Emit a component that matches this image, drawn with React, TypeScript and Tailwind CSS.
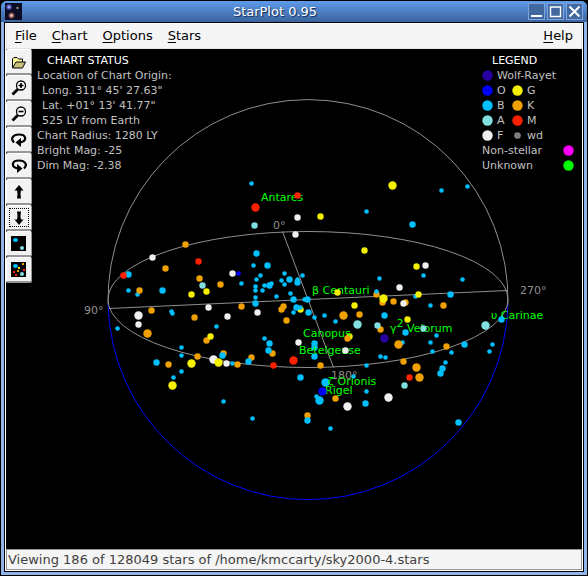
import type { ReactNode } from 'react'

type Kind = 'W' | 'O' | 'B' | 'A' | 'F' | 'G' | 'K' | 'M'

const colors: Record<Kind, string> = {
  W: '#2800a0',
  O: '#0000ff',
  B: '#00bfff',
  A: '#80e0e0',
  F: '#f0f0f0',
  G: '#f4f000',
  K: '#f0a000',
  M: '#ff2000',
}

// radius by brightness class
const radii: Record<number, number> = { 2: 2.3, 3: 3.2, 4: 4.2 }

// [x, y, brightness class, spectral class]
const stars: [number, number, number, Kind][] = [
  [185, 244, 3, 'K'], [152, 257, 3, 'F'], [198, 261, 3, 'M'], [165, 268, 3, 'K'],
  [128, 274, 3, 'B'], [123, 275, 3, 'M'], [199, 278, 3, 'K'], [202, 285, 3, 'A'],
  [220, 284, 3, 'K'], [238, 273, 2, 'O'], [232, 273, 3, 'F'], [128, 290, 2, 'B'],
  [137, 294, 2, 'B'], [139, 290, 3, 'K'], [162, 290, 3, 'B'], [191, 294, 3, 'G'],
  [206, 291, 3, 'G'], [151, 310, 3, 'K'], [138, 315, 4, 'F'], [138, 324, 3, 'F'],
  [117, 328, 2, 'B'], [147, 333, 4, 'K'], [171, 311, 2, 'B'], [172, 313, 2, 'B'],
  [194, 317, 3, 'K'], [208, 307, 3, 'F'], [227, 316, 3, 'F'], [216, 326, 2, 'B'],
  [206, 340, 3, 'K'], [210, 336, 3, 'G'], [181, 347, 2, 'B'], [181, 355, 2, 'B'],
  [197, 356, 3, 'K'], [156, 362, 3, 'B'], [168, 364, 3, 'K'], [191, 363, 4, 'G'],
  [181, 371, 2, 'B'], [173, 377, 2, 'B'], [172, 385, 4, 'G'], [213, 359, 4, 'F'],
  [218, 362, 4, 'G'], [223, 353, 3, 'K'], [222, 355, 3, 'B'], [226, 363, 3, 'F'],
  [232, 363, 2, 'B'], [237, 364, 3, 'K'], [223, 401, 2, 'B'],
  [251, 183, 2, 'B'], [255, 207, 4, 'M'], [254, 225, 3, 'A'], [297, 217, 3, 'F'],
  [320, 216, 3, 'G'], [295, 234, 3, 'F'], [366, 211, 2, 'B'], [364, 250, 3, 'G'],
  [256, 253, 3, 'B'], [253, 265, 2, 'B'], [267, 265, 3, 'B'], [260, 275, 2, 'B'],
  [256, 279, 2, 'B'], [241, 283, 2, 'B'], [264, 285, 2, 'B'], [269, 285, 3, 'B'],
  [271, 283, 2, 'B'], [255, 286, 2, 'B'], [255, 290, 2, 'B'], [284, 273, 2, 'B'],
  [281, 280, 2, 'B'], [289, 279, 3, 'B'], [284, 284, 2, 'B'], [297, 279, 2, 'B'],
  [297, 282, 3, 'B'], [302, 275, 2, 'B'], [255, 297, 2, 'B'], [255, 303, 3, 'B'],
  [262, 290, 2, 'B'], [276, 296, 2, 'B'], [290, 293, 2, 'B'], [293, 299, 3, 'B'],
  [304, 299, 2, 'B'], [307, 299, 3, 'B'], [241, 306, 3, 'K'], [257, 312, 3, 'F'],
  [281, 309, 3, 'K'], [283, 306, 3, 'K'], [286, 320, 3, 'K'], [300, 309, 3, 'G'],
  [296, 307, 3, 'B'], [300, 307, 2, 'B'], [293, 312, 2, 'B'], [308, 312, 3, 'B'],
  [314, 317, 2, 'B'], [324, 315, 2, 'B'], [335, 321, 2, 'B'], [343, 315, 4, 'K'],
  [354, 305, 3, 'G'], [359, 314, 3, 'K'], [357, 324, 4, 'A'], [349, 336, 3, 'G'],
  [298, 342, 3, 'F'], [264, 338, 2, 'B'], [269, 343, 3, 'B'], [272, 353, 3, 'K'],
  [268, 350, 3, 'B'], [251, 357, 3, 'K'], [248, 361, 3, 'B'], [273, 365, 3, 'M'],
  [293, 360, 4, 'M'], [314, 343, 3, 'B'], [314, 347, 3, 'B'], [314, 356, 3, 'B'],
  [320, 365, 3, 'K'], [300, 377, 3, 'B'], [325, 382, 4, 'B'], [316, 396, 2, 'B'],
  [319, 400, 4, 'B'], [335, 398, 3, 'K'], [347, 406, 4, 'F'], [353, 376, 2, 'B'],
  [366, 365, 2, 'B'], [366, 391, 2, 'B'], [365, 403, 3, 'B'], [307, 415, 3, 'K'],
  [307, 420, 3, 'B'], [252, 418, 2, 'B'], [330, 428, 2, 'B'],
  [392, 185, 4, 'G'], [441, 190, 2, 'B'], [467, 186, 2, 'B'], [412, 224, 3, 'B'],
  [416, 266, 3, 'G'], [425, 265, 3, 'F'], [423, 275, 2, 'B'], [379, 278, 2, 'B'],
  [462, 279, 2, 'B'], [399, 287, 3, 'F'], [376, 294, 3, 'K'], [376, 291, 2, 'B'],
  [415, 296, 2, 'B'], [418, 294, 3, 'G'], [450, 294, 3, 'B'], [382, 302, 3, 'K'],
  [383, 298, 4, 'G'], [393, 301, 3, 'K'], [405, 302, 3, 'K'], [403, 303, 3, 'F'],
  [430, 305, 2, 'B'], [443, 305, 3, 'K'], [384, 315, 3, 'B'], [407, 319, 3, 'G'],
  [380, 329, 3, 'K'], [377, 325, 3, 'A'], [405, 332, 3, 'B'], [436, 335, 2, 'B'],
  [384, 338, 4, 'W'], [402, 342, 2, 'B'], [398, 344, 4, 'K'], [430, 342, 2, 'B'],
  [432, 351, 2, 'B'], [446, 346, 3, 'K'], [451, 352, 2, 'B'], [464, 344, 3, 'B'],
  [492, 344, 2, 'B'], [489, 351, 2, 'B'], [485, 325, 4, 'A'], [380, 356, 2, 'B'],
  [385, 357, 2, 'B'], [403, 361, 3, 'K'], [416, 367, 4, 'K'], [445, 362, 2, 'B'],
  [442, 368, 3, 'B'], [440, 373, 3, 'B'], [409, 377, 3, 'M'], [419, 377, 4, 'K'],
  [404, 385, 3, 'A'], [388, 397, 4, 'F'], [458, 422, 3, 'B'],
]

// stars drawn over the name labels
const frontStars: [number, number, number, Kind][] = [
  [297, 195, 3, 'M'], [337, 292, 3, 'G'], [345, 350, 3, 'F'], [347, 338, 3, 'K'],
  [423, 328, 3, 'A'], [501, 319, 3, 'B'], [322, 391, 4, 'O'],
]

const names = [
  { x: 261, y: 201, text: 'Antares' },
  { x: 312, y: 294, text: 'β Centauri' },
  { x: 303, y: 337, text: 'Canopus' },
  { x: 299, y: 354, text: 'Betelgeuse' },
  { x: 328, y: 385, text: 'ζ Orionis' },
  { x: 325, y: 394, text: 'Rigel' },
  { x: 491, y: 319, text: 'υ Carinae' },
]

function Star({ star }: { star: [number, number, number, Kind] }) {
  const [x, y, size, kind] = star
  return <circle cx={x + 0.5} cy={y + 0.5} r={radii[size]} fill={colors[kind]} />
}

function StarChart() {
  return (
    <svg
      viewBox="32 49 550 500"
      className="absolute inset-0 h-full w-full text-[11px]"
      role="img"
      aria-label="Star chart"
    >
      <g fill="none" strokeWidth="1">
        <path d="M108.06 304.5 A200 200 0 1 1 507.94 304.5" stroke="#909090" />
        <path d="M108.06 304.5 A200 200 0 0 0 507.94 304.5" stroke="#0000ff" />
        <ellipse cx="308" cy="299.5" rx="200" ry="68" stroke="#909090" />
        <path d="M109 308.5 L507 290.5 M282.5 231.5 L333.5 367.5" stroke="#909090" />
      </g>
      <g fill="#909090">
        <text x="273" y="229">0°</text>
        <text x="84" y="314">90°</text>
        <text x="520" y="294">270°</text>
        <text x="331" y="379">180°</text>
      </g>
      {stars.map((star, i) => (
        <Star key={i} star={star} />
      ))}
      <g fill="#00ff00">
        {names.map((name) => (
          <text key={name.text} x={name.x} y={name.y}>
            {name.text}
          </text>
        ))}
        <text x="390" y="332">
          γ<tspan dy="-5">2</tspan>
          <tspan dy="5"> Velorum</tspan>
        </text>
      </g>
      {frontStars.map((star, i) => (
        <Star key={i} star={star} />
      ))}
    </svg>
  )
}

function Dot({ color }: { color: string }) {
  return (
    <svg viewBox="0 0 11 11" className="size-[11px] shrink-0">
      <circle cx="5.5" cy="5.5" r="5.2" fill={color} />
    </svg>
  )
}

function Legend() {
  const pairs: [Kind, Kind][] = [['O', 'G'], ['B', 'K'], ['A', 'M']]
  return (
    <section className="absolute top-1 right-2 w-[92px] text-[#c0c0c0]">
      <h2 className="pl-[10px] text-white">LEGEND</h2>
      <div className="flex items-center gap-1">
        <Dot color={colors.W} />
        Wolf-Rayet
      </div>
      {pairs.map(([left, right]) => (
        <div key={left} className="flex items-center gap-1">
          <Dot color={colors[left]} />
          <span className="w-[11px]">{left}</span>
          <Dot color={colors[right]} />
          {right}
        </div>
      ))}
      <div className="flex items-center gap-1">
        <Dot color={colors.F} />
        <span className="w-[11px]">F</span>
        <svg viewBox="0 0 11 11" className="size-[11px] shrink-0">
          <circle cx="5.5" cy="5.5" r="3.3" fill="#808080" />
        </svg>
        wd
      </div>
      <div className="flex items-center justify-between">
        Non-stellar
        <Dot color="#ff00ff" />
      </div>
      <div className="flex items-center justify-between">
        Unknown
        <Dot color="#00ff00" />
      </div>
    </section>
  )
}

function ChartStatus() {
  return (
    <section className="absolute top-1 left-[5px] whitespace-nowrap text-[#c0c0c0]">
      <h2 className="pl-[10px] text-white">CHART STATUS</h2>
      <p>Location of Chart Origin:</p>
      <p className="pl-[5px]">Long. 311° 45' 27.63"</p>
      <p className="pl-[5px]">Lat. +01° 13' 41.77"</p>
      <p className="pl-[5px]">525 LY from Earth</p>
      <p>Chart Radius: 1280 LY</p>
      <p>Bright Mag: -25</p>
      <p>Dim Mag: -2.38</p>
    </section>
  )
}

const tools: { label: string; icon: ReactNode; focused?: boolean }[] = [
  {
    label: 'Open',
    icon: (
      <>
        <path d="M1.5 13.5 V5 L3 3.5 H6 L7.5 5 H11.5 V8" fill="#ffff99" stroke="#000" />
        <path d="M1.5 14 L5 8 H14.5 L11.5 14 Z" fill="#c6c27c" stroke="#000" />
      </>
    ),
  },
  {
    label: 'Zoom in',
    icon: (
      <>
        <path d="M7 9 L1.5 14.5" stroke="#000" strokeWidth="2.8" />
        <circle cx="10" cy="5.5" r="4.5" fill="#fff" stroke="#000" strokeWidth="1.3" />
        <path d="M7.5 5.5 H12.5 M10 3 V8" stroke="#000" strokeWidth="1.7" />
      </>
    ),
  },
  {
    label: 'Zoom out',
    icon: (
      <>
        <path d="M7 9 L1.5 14.5" stroke="#000" strokeWidth="2.8" />
        <circle cx="10" cy="5.5" r="4.5" fill="#fff" stroke="#000" strokeWidth="1.3" />
        <path d="M7.5 5.5 H12.5" stroke="#000" strokeWidth="1.7" />
      </>
    ),
  },
  {
    label: 'Rotate clockwise',
    icon: (
      <>
        <path d="M3 10.5 C-1 6.5 2 2.5 8 2.5 C15.5 2.5 16.5 9 9 10.5" fill="none" stroke="#000" strokeWidth="2.2" />
        <path d="M4.5 10.5 L10 6 V15 Z" fill="#000" />
      </>
    ),
  },
  {
    label: 'Rotate counterclockwise',
    icon: (
      <>
        <path d="M13 10.5 C17 6.5 14 2.5 8 2.5 C0.5 2.5 -0.5 9 7 10.5" fill="none" stroke="#000" strokeWidth="2.2" />
        <path d="M11.5 10.5 L6 6 V15 Z" fill="#000" />
      </>
    ),
  },
  {
    label: 'Tilt up',
    icon: (
      <>
        <path d="M8 1 L12.5 6.5 H3.5 Z" fill="#000" />
        <path d="M6 6 H10 L9.5 10 L10 14.5 H6 L6.5 10 Z" fill="#000" />
      </>
    ),
  },
  {
    label: 'Tilt down',
    focused: true,
    icon: (
      <>
        <path d="M8 15 L12.5 9.5 H3.5 Z" fill="#000" />
        <path d="M6 10 H10 L9.5 6 L10 1.5 H6 L6.5 6 Z" fill="#000" />
      </>
    ),
  },
  {
    label: 'Fewer stars',
    icon: (
      <>
        <rect x="0" y="0" width="15" height="15" fill="#000" />
        <ellipse cx="4.5" cy="4" rx="2.5" ry="2" fill="#00bfff" />
        <circle cx="11" cy="12" r="2" fill="#80e0e0" />
      </>
    ),
  },
  {
    label: 'More stars',
    icon: (
      <>
        <rect x="0" y="0" width="15" height="15" fill="#000" />
        <ellipse cx="4.5" cy="4" rx="2.5" ry="2" fill="#00bfff" />
        <circle cx="11" cy="12" r="2" fill="#80e0e0" />
        <path d="M11 1 h2 v2 h-2z M6 8 h2 v2 h-2z" fill="#f0a000" />
        <path d="M7 5 h2 v2 h-2z" fill="#f4f000" />
        <path d="M12 7 h2 v2 h-2z M2 9 h2 v2 h-2z M4 12 h2 v2 h-2z" fill="#ff2000" />
      </>
    ),
  },
]

function Toolbar() {
  return (
    <div role="toolbar" aria-label="Chart tools" className="flex w-[26px] shrink-0 flex-col">
      {tools.map((tool) => (
        <button
          key={tool.label}
          type="button"
          aria-label={tool.label}
          className="relative flex h-[26px] items-center justify-center rounded-xs border border-t-white border-r-[#969696] border-b-2 border-b-[#969696] border-l-white bg-[#f2f2f2]"
        >
          <svg viewBox="0 0 16 16" className="size-4">
            {tool.icon}
          </svg>
          {tool.focused && <span className="absolute inset-[2px] border border-dotted border-black" />}
        </button>
      ))}
    </div>
  )
}

function MenuItem({ label }: { label: string }) {
  return (
    <button type="button" className="leading-4">
      <span className="underline underline-offset-2">{label[0]}</span>
      {label.slice(1)}
    </button>
  )
}

function WindowButton({ label, children }: { label: string; children: ReactNode }) {
  return (
    <button
      type="button"
      aria-label={label}
      className="size-[17px] border border-[#7da5dc] bg-[#41699f]"
    >
      <svg viewBox="0 0 15 15" className="size-full" fill="none" stroke="#fff" strokeWidth="2">
        {children}
      </svg>
    </button>
  )
}

export default function App() {
  return (
    <div className="flex h-screen flex-col bg-black font-['DejaVu_Sans',sans-serif] text-[11px] leading-[15px]">
      <div className="m-px flex min-h-0 flex-1 flex-col rounded-t-md bg-[#8fb4ea]">
        {/* Title bar */}
        <header className="flex h-[21px] shrink-0 items-center rounded-t-md bg-linear-to-b from-[#5f9bea] to-[#3a64a0] px-1">
          <svg viewBox="0 0 17 17" className="size-[17px]" aria-hidden="true">
            <defs>
              <radialGradient id="blueGlow">
                <stop offset="0" stopColor="#e0e0ff" />
                <stop offset="0.4" stopColor="#6868d8" />
                <stop offset="1" stopColor="#101030" />
              </radialGradient>
              <radialGradient id="redGlow">
                <stop offset="0" stopColor="#ffe0d0" />
                <stop offset="0.5" stopColor="#b07068" />
                <stop offset="1" stopColor="#101028" />
              </radialGradient>
            </defs>
            <rect width="17" height="17" fill="#0c0c24" />
            <circle cx="4" cy="4" r="3.5" fill="url(#blueGlow)" />
            <circle cx="6.5" cy="12.5" r="3.5" fill="url(#redGlow)" />
            <circle cx="12.5" cy="5" r="1.2" fill="#908c80" />
          </svg>
          <h1 className="flex-1 text-center text-[13px] text-white [text-shadow:1px_1px_1px_#142850]">
            StarPlot 0.95
          </h1>
          <div className="flex gap-[2px]">
            <WindowButton label="Minimize">
              <path d="M2 12 H13" />
            </WindowButton>
            <WindowButton label="Maximize">
              <path d="M2.5 3 H12.5 V12.5 H2.5 Z" strokeWidth="1.4" />
            </WindowButton>
            <WindowButton label="Close">
              <path d="M2.5 2.5 L12.5 12.5 M12.5 2.5 L2.5 12.5" />
            </WindowButton>
          </div>
        </header>

        <div className="mx-[3px] mb-[3px] flex min-h-0 flex-1 flex-col border border-black bg-white px-px pb-px">
          {/* Menu bar */}
          <nav className="flex h-[26px] shrink-0 items-center gap-[15px] border border-[#e4e4e4] border-t-white bg-[#f5f5f5] px-2 text-[13px]">
            <MenuItem label="File" />
            <MenuItem label="Chart" />
            <MenuItem label="Options" />
            <MenuItem label="Stars" />
            <span className="flex-1" />
            <MenuItem label="Help" />
          </nav>

          {/* Chart */}
          <main className="flex min-h-0 flex-1 bg-black">
            <Toolbar />
            <div className="relative flex-1">
              <StarChart />
              <ChartStatus />
              <Legend />
            </div>
          </main>

          {/* Status bar */}
          <footer className="h-[21px] shrink-0 truncate border border-[#969696] bg-[#f5f5f5] px-px text-[13px] leading-5 text-[#404040]">
            Viewing 186 of 128049 stars of /home/kmccarty/sky2000-4.stars
          </footer>
        </div>
      </div>
    </div>
  )
}
